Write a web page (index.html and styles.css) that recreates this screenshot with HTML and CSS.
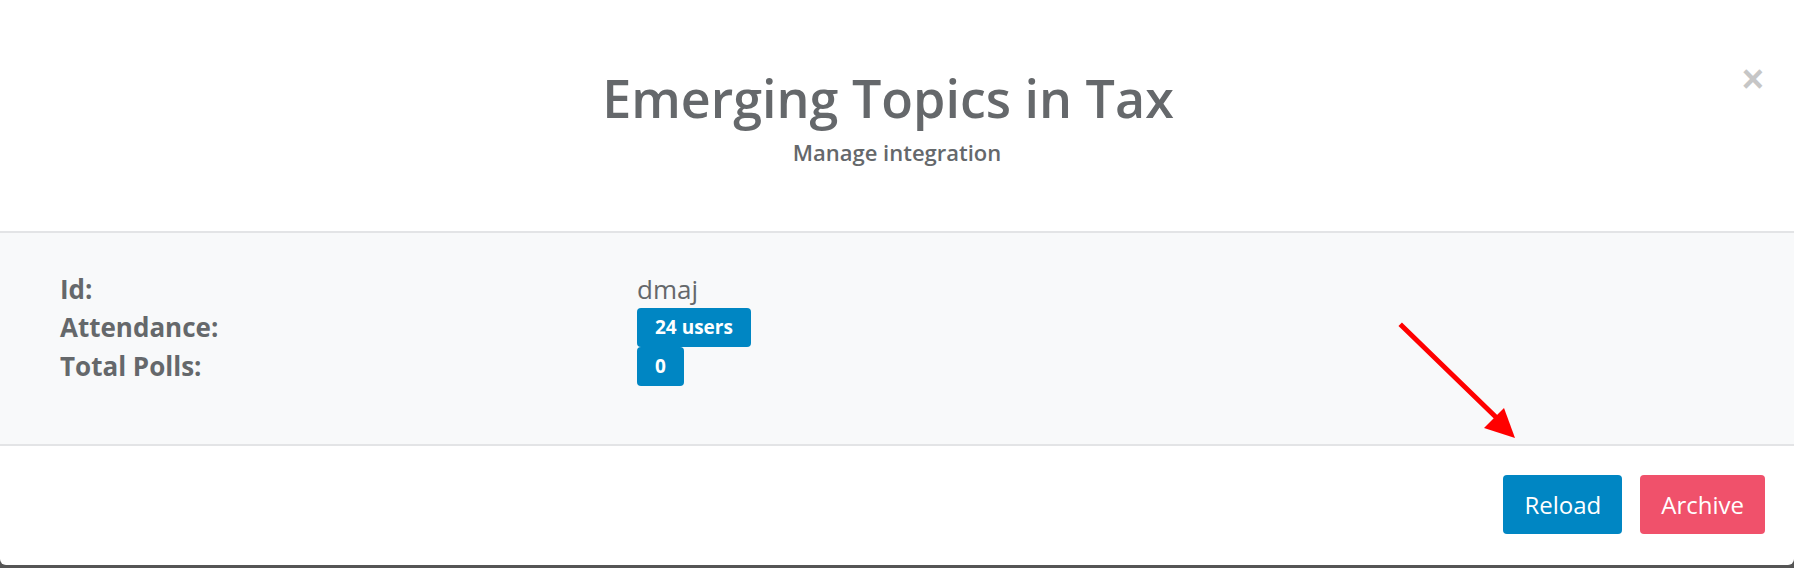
FILE: index.html
```html
<!DOCTYPE html>
<html lang="en">
<head>
    <meta charset="UTF-8">
    <meta name="viewport" content="width=device-width, initial-scale=1.0">
    <title>Emerging Topics in Tax</title>
    <link rel="stylesheet" href="styles.css">
</head>
<body>
    <div class="modal">
        <button class="close" aria-label="Close">&times;</button>

        <div class="modal-header">
            <h1>Emerging Topics in Tax</h1>
            <p>Manage integration</p>
        </div>

        <div class="modal-body">
            <div class="details">
                <div class="label">Id:</div>
                <div class="value">dmaj</div>
                <div class="label">Attendance:</div>
                <div class="value"><span class="badge">24 users</span></div>
                <div class="label">Total Polls:</div>
                <div class="value"><span class="badge">0</span></div>
            </div>
        </div>

        <div class="modal-footer">
            <button class="btn btn-primary">Reload</button>
            <button class="btn btn-danger">Archive</button>
        </div>

        <!-- annotation arrow pointing at the reload button -->
        <svg class="pointer" width="140" height="130" viewBox="0 0 140 130">
            <line x1="6" y1="6" x2="106" y2="103" stroke="#ff0000" stroke-width="5" stroke-linecap="square"/>
            <polygon points="119,118 88,108 108,88" fill="#ff0000"/>
        </svg>
    </div>
</body>
</html>
```

FILE: styles.css
```css
body {
    margin: 0;
    background: #555555;
    font-family: "Open Sans", Arial, sans-serif;
    color: #65686b;
}
.modal {
    position: relative;
    background: #ffffff;
    height: 565px;
    border-radius: 0 0 6px 6px;
    overflow: hidden;
}
.close {
    position: absolute;
    top: 60px;
    right: 30px;
    background: none;
    border: none;
    padding: 0;
    font-family: Arial, sans-serif;
    font-size: 38px;
    font-weight: bold;
    line-height: 1;
    color: #c6c6c6;
    cursor: pointer;
}
.modal-header {
    height: 233px;
    box-sizing: border-box;
    padding-top: 69px;
    text-align: center;
    border-bottom: 2px solid #e3e4e6;
}
.modal-header h1 {
    margin: 0;
    padding-right: 18px;
    font-size: 52px;
    font-weight: 600;
    line-height: 1.1;
}
.modal-header p {
    margin: 11px 0 0;
    font-size: 22px;
    font-weight: 600;
}
.modal-body {
    height: 213px;
    box-sizing: border-box;
    background: #f8f9fa;
    padding: 38px 60px 0;
    border-bottom: 2px solid #e3e4e6;
}
.details {
    display: grid;
    grid-template-columns: 577px auto;
    align-items: center;
}
.label {
    font-size: 26px;
    font-weight: 700;
    line-height: 1.1;
}
.value {
    font-size: 26px;
    line-height: 37px;
}
.badge {
    display: inline-block;
    background: #0086c3;
    color: #ffffff;
    font-size: 19px;
    font-weight: 700;
    line-height: 39px;
    padding: 0 18px;
    border-radius: 4px;
    vertical-align: top;
}
.modal-footer {
    display: flex;
    justify-content: flex-end;
    gap: 18px;
    padding: 29px 29px 0;
}
.btn {
    font-family: "Open Sans", Arial, sans-serif;
    font-size: 24px;
    color: #ffffff;
    border: none;
    border-radius: 4px;
    height: 59px;
    padding: 0 21px;
    cursor: pointer;
}
.btn-primary {
    background: #0086c3;
}
.btn-danger {
    background: #f0516b;
}
.pointer {
    position: absolute;
    left: 1396px;
    top: 320px;
}
```
